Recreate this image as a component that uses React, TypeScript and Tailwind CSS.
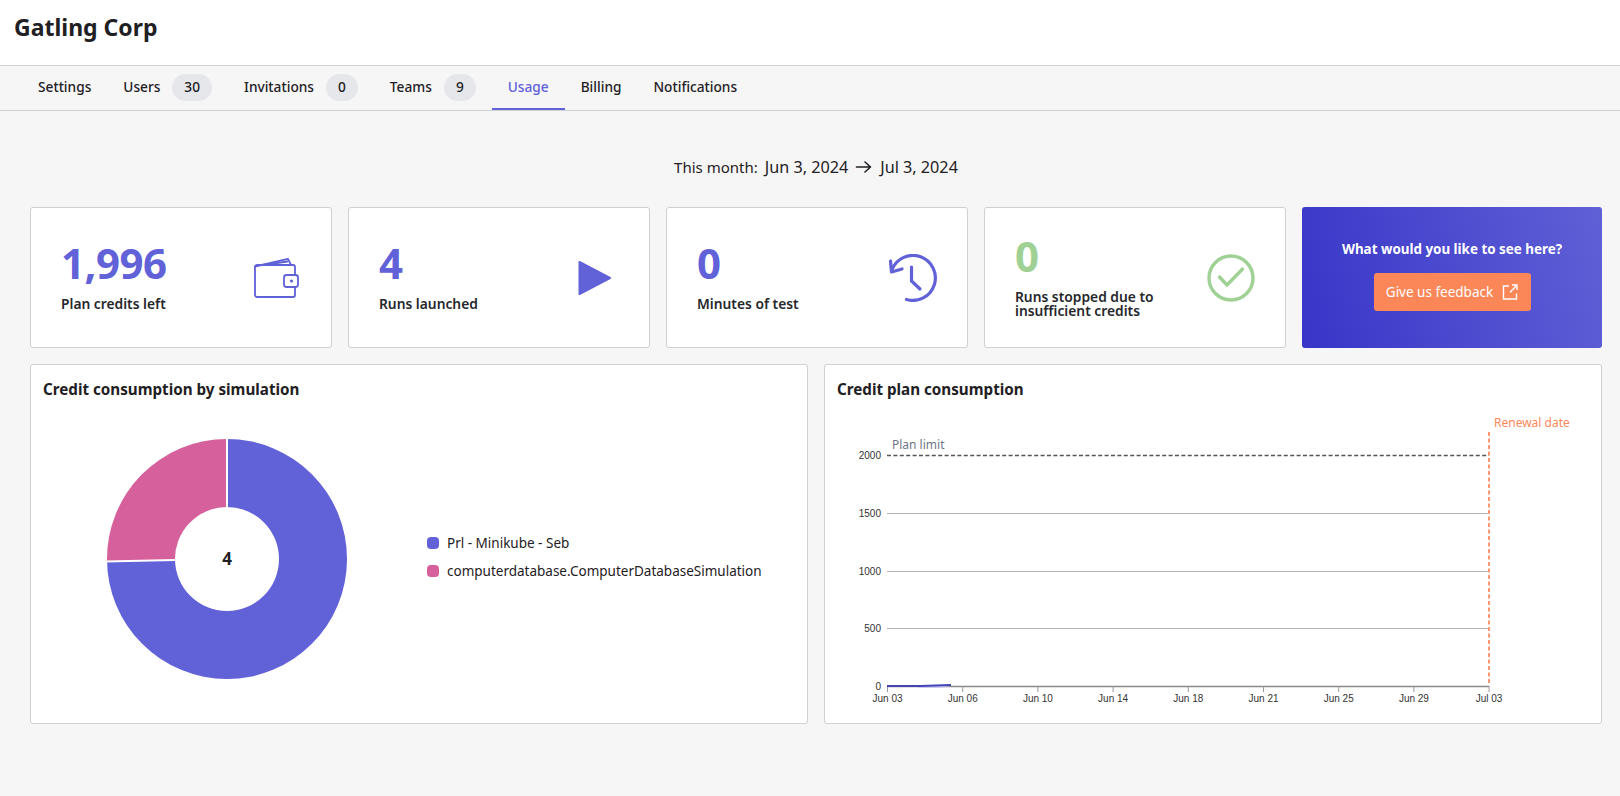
import React from "react";

const tabs: { label: string; badge?: string; active?: boolean }[] = [
  { label: "Settings" },
  { label: "Users", badge: "30" },
  { label: "Invitations", badge: "0" },
  { label: "Teams", badge: "9" },
  { label: "Usage", active: true },
  { label: "Billing" },
  { label: "Notifications" },
];

const Wallet = () => (
  <svg width="46" height="42" viewBox="-1 -1 46 42" fill="none" stroke="#6161d8" strokeWidth="1.8" strokeLinejoin="round" strokeLinecap="round" className="mr-[32px]">
    <path d="M1 8.5 34 .8 37 7" />
    <path d="M9 7 33.5 3.5" />
    <path d="M1 9a2 2 0 0 1 2-2h36a2 2 0 0 1 2 2v8M41 29v8a2 2 0 0 1-2 2H3a2 2 0 0 1-2-2V9" />
    <rect x="30" y="17" width="14" height="12" rx="2.5" fill="#fff" />
    <circle cx="37.5" cy="23" r="1.6" fill="#6161d8" stroke="none" />
  </svg>
);

const Play = () => (
  <svg width="34" height="36" viewBox="0 0 34 36" className="mr-[37px]">
    <path d="M1.5 2 32 18 1.5 34Z" fill="#6161d8" stroke="#6161d8" strokeWidth="2" strokeLinejoin="round" />
  </svg>
);

const History = () => (
  <svg width="50" height="48" viewBox="0 0 50 48" fill="none" stroke="#6161d8" strokeWidth="3.2" strokeLinecap="round" strokeLinejoin="round" className="mr-[29px]">
    <path d="M18.5 45.5A22.5 22.5 0 1 0 4 15.5" />
    <path d="M2.5 7 3.5 18 14 15" />
    <path d="M23.5 13V27L32 35" />
  </svg>
);

const Check = () => (
  <svg width="48" height="48" viewBox="0 0 48 48" fill="none" stroke="#9fd194" strokeWidth="3.4" strokeLinecap="round" strokeLinejoin="round" className="mr-[30px]">
    <circle cx="24" cy="24" r="22" />
    <path d="M12.5 23 20 31 35.5 15" />
  </svg>
);

function Stat({ value, label, color, icon }: { value: string; label: React.ReactNode; color: string; icon: React.ReactNode }) {
  return (
    <div className="flex items-center justify-between rounded-[3px] border border-[#cfcfd6] bg-white pl-[30px]">
      <div>
        <div className={`text-[42px] font-bold leading-[60px] tracking-[-0.5px] ${color}`}>{value}</div>
        <div className="pb-[11px] pt-1 text-[13.8px] font-semibold leading-[14px] text-[#26272b]">{label}</div>
      </div>
      {icon}
    </div>
  );
}

export default function App() {
  const ticks = ["Jun 03", "Jun 06", "Jun 10", "Jun 14", "Jun 18", "Jun 21", "Jun 25", "Jun 29", "Jul 03"];
  const rows: [string, number][] = [["2000", 455.5], ["1500", 513.5], ["1000", 571.5], ["500", 628.5], ["0", 686.5]];
  return (
    <div className="min-h-screen bg-[#f6f6f7] font-['Noto_Sans',sans-serif] text-[#1f2023]">
      <header className="flex h-[66px] items-start border-b border-[#cfcfd6] bg-white pl-[14px] pt-[9px]">
        <h1 className="text-[23px] font-bold leading-[36px]">Gatling Corp</h1>
      </header>
      <nav className="flex h-[45px] border-b border-[#cfcfd6] pl-[22px]">
        {tabs.map((t) => (
          <div
            key={t.label}
            className={`flex h-[44px] items-center gap-[12px] border-b-2 px-4 text-[13.7px] font-medium ${t.active ? "border-[#6161d8] text-[#6161d8]" : "border-transparent"}`}
          >
            <span>{t.label}</span>
            {t.badge && (
              <span className="flex h-[27px] items-center rounded-full bg-[#e5e7eb] px-3 text-[13.7px] font-medium">{t.badge}</span>
            )}
          </div>
        ))}
      </nav>
      <main className="pl-[30px] pr-[18px] pt-[44px]">
        <div className="flex h-[24px] items-center justify-center gap-[7px] text-[15px]">
          <span>This month:</span>
          <span className="text-[16.2px]">Jun 3, 2024</span>
          <svg width="18" height="14" viewBox="0 0 18 14" fill="none" stroke="#1f2023" strokeWidth="1.6" strokeLinecap="round" strokeLinejoin="round">
            <path d="M1.5 7h14M10 2l5.5 5-5.5 5" />
          </svg>
          <span className="text-[16.2px]">Jul 3, 2024</span>
        </div>
        <div className="mt-[28px] grid h-[141px] grid-cols-[repeat(4,302px)_1fr] gap-4">
          <Stat value="1,996" label="Plan credits left" color="text-[#6161d8]" icon={<Wallet />} />
          <Stat value="4" label="Runs launched" color="text-[#6161d8]" icon={<Play />} />
          <Stat value="0" label="Minutes of test" color="text-[#6161d8]" icon={<History />} />
          <Stat value="0" label={<>Runs stopped due to<br />insufficient credits</>} color="text-[#9fd194]" icon={<Check />} />
          <div className="flex flex-col items-center rounded-[3px] bg-[linear-gradient(75deg,#3835c8,#6060d6)] pt-[32px]">
            <div className="text-[13.4px] font-bold leading-[20px] text-white">What would you like to see here?</div>
            <div className="mt-[14px] flex h-[38px] w-[157px] items-center justify-center gap-[9px] rounded-[3px] bg-[#fb8759] text-[13.5px] text-white">
              <span>Give us feedback</span>
              <svg width="16" height="16" viewBox="0 0 16 16" fill="none" stroke="#fff" strokeWidth="1.4">
                <path d="M7 2H1.5v13h13V9.5M8 8.5l6.5-7M10 1h5v5" />
              </svg>
            </div>
          </div>
        </div>
        <div className="mt-4 grid h-[360px] grid-cols-2 gap-4">
          <section className="rounded-[3px] border border-[#cfcfd6] bg-white">
            <h2 className="h-[47px] pl-3 pt-3 text-[15.2px] font-bold leading-[24px]">Credit consumption by simulation</h2>
            <div className="flex items-center pl-[75px] pt-[26px]">
              <div className="relative h-[242px] w-[242px]">
                <svg width="242" height="242" viewBox="-121 -121 242 242">
                  <path d="M0 -120A120 120 0 1 1 -120 0L-52 0A52 52 0 1 0 0 -52Z" fill="#6161d8" />
                  <path d="M-120 2A120 120 0 0 1 0 -120L0 -52A52 52 0 0 0 -52 2Z" fill="#d6609c" />
                  <path d="M0 -121V-52M-121 2.5L-52 1" stroke="#fff" strokeWidth="2" />
                </svg>
                <span className="absolute inset-0 flex items-center justify-center text-[17px] font-bold">4</span>
              </div>
              <div className="mb-[4px] ml-[79px] flex flex-col gap-[8px] text-[13.5px] leading-[20px]">
                <div className="flex items-center gap-[8px]"><span className="h-3 w-3 rounded-[4px] bg-[#6161d8]" />Prl - Minikube - Seb</div>
                <div className="flex items-center gap-[8px]"><span className="h-3 w-3 rounded-[4px] bg-[#d6609c]" />computerdatabase.ComputerDatabaseSimulation</div>
              </div>
            </div>
          </section>
          <section className="rounded-[3px] border border-[#cfcfd6] bg-white">
            <h2 className="h-[47px] pl-3 pt-3 text-[15.2px] font-bold leading-[24px]">Credit plan consumption</h2>
            <svg width="776" height="311" viewBox="825 412 776 311" className="block">
              {rows.map(([l, y]) => (
                <g key={l}>
                  <text x="881" y={y + 3.5} textAnchor="end" fontSize="10" fontFamily="Liberation Sans" fill="#333">{l}</text>
                  {l === "2000" ? (
                    <line x1="887" x2="1489" y1={y} y2={y} stroke="#555" strokeWidth="1.4" strokeDasharray="4 2.4" />
                  ) : (
                    <line x1="887" x2="1489" y1={y} y2={y} stroke={l === "0" ? "#888" : "#b3b3b3"} strokeWidth={l === "0" ? 1.4 : 1} />
                  )}
                </g>
              ))}
              {ticks.map((t, i) => {
                const x = 887.5 + i * 75.2;
                return (
                  <g key={t}>
                    <line x1={x} x2={x} y1="686" y2="692" stroke="#999" />
                    <text x={x} y="701.5" textAnchor="middle" fontSize="10" fontFamily="Liberation Sans" fill="#333">{t}</text>
                  </g>
                );
              })}
              <path d="M918 688 L940 688 L951 686 L920 686 Z" fill="#c9c9f0" />
              <path d="M887 686 L920 686 L951 685" stroke="#4444b5" strokeWidth="2" fill="none" />
              <line x1="1489" x2="1489" y1="432" y2="684" stroke="#ff9770" strokeWidth="2" strokeDasharray="4 2.5" />
              <text x="892" y="449" fontSize="12" fill="#6f7787">Plan limit</text>
              <text x="1494" y="427" fontSize="12" fill="#fb8759">Renewal date</text>
            </svg>
          </section>
        </div>
      </main>
    </div>
  );
}
